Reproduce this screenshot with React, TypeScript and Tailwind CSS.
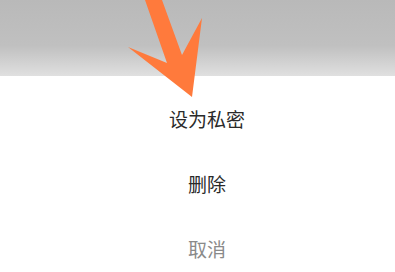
export default function App() {
  return (
    <div className="relative h-[272px] w-[395px] overflow-hidden bg-white font-['Noto_Sans_CJK_SC',sans-serif]">
      <div className="h-[76px] w-full bg-gradient-to-b from-[#b9b9b9] via-[#c0c0c0] via-60% to-[#e0e0e0]" />

      <div className="flex flex-col pl-[19px] pt-[11px]">
        <div className="flex h-[65px] items-center justify-center text-[19px] text-[#2a2a2a]">设为私密</div>
        <div className="flex h-[65px] items-center justify-center text-[19px] text-[#2a2a2a]">删除</div>
        <div className="flex h-[65px] items-center justify-center text-[19px] text-[#8a8a8a]">取消</div>
      </div>

      {/* pointer arrow over the sheet */}
      <svg className="absolute left-0 top-0" width="395" height="110" viewBox="0 0 395 110">
        <polygon
          points="145,0 162,0 182,55 202,18 192,97 128,47 167,63"
          fill="#ff7a3c"
        />
      </svg>
    </div>
  )
}
